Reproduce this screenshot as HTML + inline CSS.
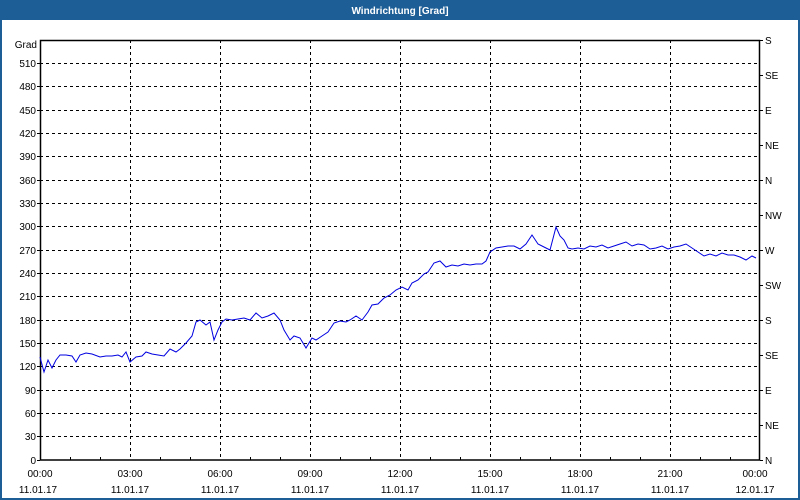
<!DOCTYPE html>
<html><head><meta charset="utf-8"><style>
body{margin:0;width:800px;height:500px;overflow:hidden;background:#fff;font-family:"Liberation Sans",sans-serif}
</style></head><body>
<svg width="800" height="500" xmlns="http://www.w3.org/2000/svg" style="display:block;font-family:'Liberation Sans',sans-serif;font-size:10px">
<rect x="0" y="0" width="800" height="500" fill="#fff"/>
<rect x="0" y="0" width="800" height="20" fill="#1d5e96"/>
<rect x="0" y="0" width="2" height="500" fill="#1d5e96"/>
<rect x="798" y="0" width="2" height="500" fill="#1d5e96"/>
<rect x="0" y="498" width="800" height="2" fill="#1d5e96"/>
<text x="400" y="14" fill="#fff" font-weight="bold" text-anchor="middle">Windrichtung [Grad]</text>
<g stroke="#000" stroke-width="1" stroke-dasharray="3,3" fill="none">
<path d="M40 63.5H760M40 86.5H760M40 110.5H760M40 133.5H760M40 156.5H760M40 180.5H760M40 203.5H760M40 226.5H760M40 250.5H760M40 273.5H760M40 296.5H760M40 320.5H760M40 343.5H760M40 366.5H760M40 390.5H760M40 413.5H760M40 436.5H760"/>
<path d="M130.5 40V460M220.5 40V460M310.5 40V460M400.5 40V460M490.5 40V460M580.5 40V460M670.5 40V460"/>
</g>
<g stroke="#000" stroke-width="1" fill="none">
<rect x="40.5" y="40.5" width="719" height="419.5" stroke-width="1.5"/>
<path d="M70.5 460v-3M100.5 460v-3M160.5 460v-3M190.5 460v-3M250.5 460v-3M280.5 460v-3M340.5 460v-3M370.5 460v-3M430.5 460v-3M460.5 460v-3M520.5 460v-3M550.5 460v-3M610.5 460v-3M640.5 460v-3M700.5 460v-3M730.5 460v-3"/>
<path d="M760 40.5h3M760 75.5h3M760 110.5h3M760 145.5h3M760 180.5h3M760 215.5h3M760 250.5h3M760 285.5h3M760 320.5h3M760 355.5h3M760 390.5h3M760 425.5h3M760 460.5h3"/>
<path d="M37 63.5h3M37 86.5h3M37 110.5h3M37 133.5h3M37 156.5h3M37 180.5h3M37 203.5h3M37 226.5h3M37 250.5h3M37 273.5h3M37 296.5h3M37 320.5h3M37 343.5h3M37 366.5h3M37 390.5h3M37 413.5h3M37 436.5h3M37 460.5h3"/>
</g>
<g text-anchor="end" fill="#000">
<text x="37" y="48">Grad</text>
<text x="36" y="67">510</text><text x="36" y="90">480</text><text x="36" y="114">450</text><text x="36" y="137">420</text><text x="36" y="160">390</text><text x="36" y="184">360</text><text x="36" y="207">330</text><text x="36" y="230">300</text><text x="36" y="254">270</text><text x="36" y="277">240</text><text x="36" y="300">210</text><text x="36" y="324">180</text><text x="36" y="347">150</text><text x="36" y="370">120</text><text x="36" y="394">90</text><text x="36" y="417">60</text><text x="36" y="440">30</text><text x="36" y="464">0</text>
</g>
<g fill="#000">
<text x="765" y="44">S</text><text x="765" y="79">SE</text><text x="765" y="114">E</text><text x="765" y="149">NE</text><text x="765" y="184">N</text><text x="765" y="219">NW</text><text x="765" y="254">W</text><text x="765" y="289">SW</text><text x="765" y="324">S</text><text x="765" y="359">SE</text><text x="765" y="394">E</text><text x="765" y="429">NE</text><text x="765" y="464">N</text>
</g>
<g text-anchor="middle" fill="#000">
<text x="40" y="477">00:00</text><text x="130" y="477">03:00</text><text x="220" y="477">06:00</text><text x="310" y="477">09:00</text><text x="400" y="477">12:00</text><text x="490" y="477">15:00</text><text x="580" y="477">18:00</text><text x="670" y="477">21:00</text><text x="755" y="477">00:00</text>
<text x="38" y="493">11.01.17</text><text x="130" y="493">11.01.17</text><text x="220" y="493">11.01.17</text><text x="310" y="493">11.01.17</text><text x="400" y="493">11.01.17</text><text x="490" y="493">11.01.17</text><text x="580" y="493">11.01.17</text><text x="670" y="493">11.01.17</text><text x="755" y="493">12.01.17</text>
</g>
<polyline fill="none" stroke="#0000e0" stroke-width="1" points="40,357 44,372 48,360 52,368 56,360 60,355 66,355 72,356 76,362 80,355 86,353 92,354 100,357 106,356 112,356 118,355 122,357 126,352 130,362 136,357 142,356 146,352 152,354 158,355 164,356 170,349 176,352 180,349 186,343 192,336 196,322 200,320 206,325 210,322 214,340 218,330 222,322 226,319 232,320 238,319 244,318 250,320 256,313 262,318 268,316 274,313 280,320 284,330 290,340 294,336 300,338 306,348 312,338 316,340 322,336 328,332 334,323 340,321 346,322 350,320 356,316 362,320 368,312 372,305 378,304 384,298 390,295 396,290 402,287 408,290 412,283 418,280 424,274 428,272 434,263 440,261 446,267 452,265 458,266 464,264 470,265 476,264 482,264 486,261 490,252 496,248 502,247 508,246 514,246 520,249 526,244 532,235 538,244 544,247 550,250 556,227 560,236 564,240 568,248 572,249 578,248 584,249 590,246 596,247 602,245 608,248 614,246 620,244 626,242 632,246 638,244 644,245 650,249 656,248 662,246 668,249 674,247 680,246 686,244 692,248 698,252 704,256 710,254 716,256 722,253 728,255 734,255 740,257 746,260 752,256 756,258"/>
</svg>
</body></html>
